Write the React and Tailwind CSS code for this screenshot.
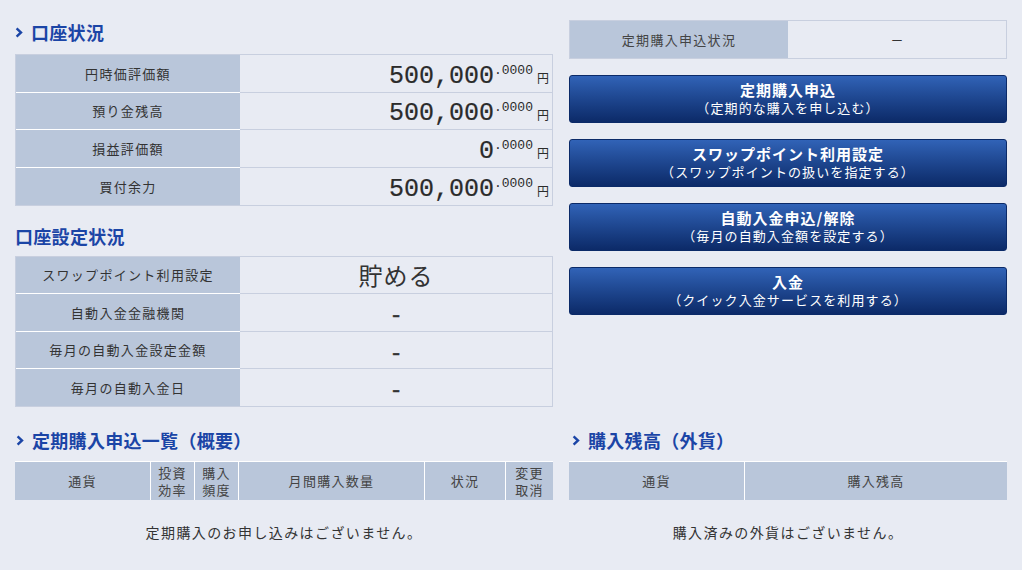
import React from "react";

const Chevron = () => (
  <svg width="8" height="11" viewBox="0 0 8 11" className="shrink-0">
    <path d="M1.6 1.4 L6 5.5 L1.6 9.6" fill="none" stroke="#1b45a6" strokeWidth="2.4" />
  </svg>
);

function Heading({ children, chevron = true, className = "" }) {
  return (
    <div
      className={`h-[24px] flex items-center gap-[8px] text-[18px] font-bold text-[#1b45a6] tracking-[0.3px] ${className}`}
    >
      {chevron && <Chevron />}
      <span>{children}</span>
    </div>
  );
}

function AmountRow({ label, value, last }) {
  return (
    <div className="flex h-[37.5px]">
      <div
        className={`w-[224px] shrink-0 bg-[#b9c6da] flex items-center justify-center text-[13px] tracking-[0.1em] text-[#333] ${
          last ? "" : "border-b border-white"
        }`}
      >
        {label}
      </div>
      <div
        className={`flex-1 flex items-end justify-end pr-[3px] pb-[3px] ${
          last ? "" : "border-b border-[#c8cfdf]"
        }`}
      >
        <div className="flex items-baseline text-[#2b2b2b]">
          <span className="font-['Liberation_Mono',monospace] text-[25px] leading-none [-webkit-text-stroke:0.2px_#2b2b2b]">{value}</span>
          <span className="relative top-[-9px] font-['Liberation_Mono',monospace] text-[13px] leading-none">.0000</span>
          <span className="ml-[4px] text-[12px] leading-none">円</span>
        </div>
      </div>
    </div>
  );
}

function SettingRow({ label, value, big, last }) {
  return (
    <div className="flex h-[37.25px]">
      <div
        className={`w-[224px] shrink-0 bg-[#b9c6da] flex items-center justify-center text-[13px] tracking-[0.1em] text-[#333] ${
          last ? "" : "border-b border-white"
        }`}
      >
        {label}
      </div>
      <div
        className={`flex-1 flex items-center justify-center text-[#333] ${
          last ? "" : "border-b border-[#c8cfdf]"
        }`}
      >
        {big ? (
          <span className="text-[24px] leading-none tracking-[1px]">{value}</span>
        ) : (
          <span className="font-['Liberation_Mono',monospace] text-[22px] leading-none pt-[10px] [-webkit-text-stroke:0.4px_#333]">-</span>
        )}
      </div>
    </div>
  );
}

function BlueButton({ title, sub }) {
  return (
    <div className="h-[48px] rounded-[3px] border border-[#0b2a68] bg-gradient-to-b from-[#3163b7] to-[#0c2a68] flex flex-col items-center justify-center text-white">
      <div className="text-[15px] font-bold leading-[18px] tracking-[1px]">{title}</div>
      <div className="text-[13px] leading-[18px] tracking-[1.1px]">{sub}</div>
    </div>
  );
}

export default function App() {
  return (
    <div className="min-h-[570px] bg-[#e8ebf3] pt-[20px] px-[15px] font-['Noto_Sans_CJK_JP','Noto_Sans',sans-serif] text-[#333]">
      <div className="flex gap-[16px]">
        {/* left column */}
        <div className="w-[538px] shrink-0">
          <Heading className="mb-[10px]">口座状況</Heading>
          <div className="border border-[#c8cfdf]">
            <AmountRow label="円時価評価額" value="500,000" />
            <AmountRow label="預り金残高" value="500,000" />
            <AmountRow label="損益評価額" value="0" />
            <AmountRow label="買付余力" value="500,000" last />
          </div>
          <Heading chevron={false} className="mt-[18px] mb-[8px]">口座設定状況</Heading>
          <div className="border border-[#c8cfdf]">
            <SettingRow label="スワップポイント利用設定" value="貯める" big />
            <SettingRow label="自動入金金融機関" />
            <SettingRow label="毎月の自動入金設定金額" />
            <SettingRow label="毎月の自動入金日" last />
          </div>
        </div>
        {/* right column */}
        <div className="flex-1">
          <div className="flex h-[39px] border border-[#c8cfdf] mb-[16px]">
            <div className="w-[218px] bg-[#b9c6da] flex items-center justify-center text-[13px] tracking-[0.1em] text-[#444]">
              定期購入申込状況
            </div>
            <div className="flex-1 flex items-center justify-center text-[13px] text-[#333]">－</div>
          </div>
          <div className="flex flex-col gap-[16px]">
            <BlueButton title="定期購入申込" sub="（定期的な購入を申し込む）" />
            <BlueButton title="スワップポイント利用設定" sub="（スワップポイントの扱いを指定する）" />
            <BlueButton title="自動入金申込/解除" sub="（毎月の自動入金額を設定する）" />
            <BlueButton title="入金" sub="（クイック入金サービスを利用する）" />
          </div>
        </div>
      </div>

      <div className="flex gap-[16px] mt-[21px]">
        <div className="w-[538px] shrink-0">
          <Heading className="mb-[9px] pl-[1px]">定期購入申込一覧（概要）</Heading>
          <div className="grid grid-cols-[135px_43px_43px_185px_80px_1fr] gap-x-px bg-white border-t border-white h-[39px] text-[13px] tracking-[0.1em] text-[#444]">
            <div className="bg-[#b9c6da] flex items-center justify-center">通貨</div>
            <div className="bg-[#b9c6da] flex items-center justify-center text-center leading-[17px]">投資<br />効率</div>
            <div className="bg-[#b9c6da] flex items-center justify-center text-center leading-[17px]">購入<br />頻度</div>
            <div className="bg-[#b9c6da] flex items-center justify-center">月間購入数量</div>
            <div className="bg-[#b9c6da] flex items-center justify-center">状況</div>
            <div className="bg-[#b9c6da] flex items-center justify-center text-center leading-[17px]">変更<br />取消</div>
          </div>
          <div className="h-[64px] flex items-center justify-center text-[14px] tracking-[0.1em] text-[#333]">
            定期購入のお申し込みはございません。
          </div>
        </div>
        <div className="flex-1">
          <Heading className="mb-[9px] pl-[3px]">購入残高（外貨）</Heading>
          <div className="grid grid-cols-[175px_1fr] gap-x-px bg-white border-t border-white h-[39px] text-[13px] tracking-[0.1em] text-[#444]">
            <div className="bg-[#b9c6da] flex items-center justify-center">通貨</div>
            <div className="bg-[#b9c6da] flex items-center justify-center">購入残高</div>
          </div>
          <div className="h-[64px] flex items-center justify-center text-[14px] tracking-[0.1em] text-[#333]">
            購入済みの外貨はございません。
          </div>
        </div>
      </div>
    </div>
  );
}
